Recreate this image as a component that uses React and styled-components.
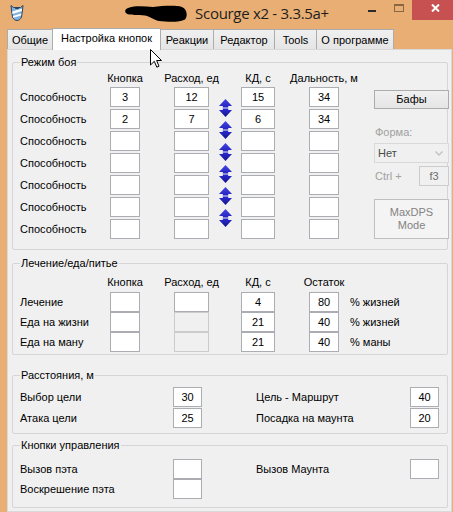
import React from "react";
import styled, { createGlobalStyle } from "styled-components";

const FRAME = "#E8AE73";
const UI_FONT = `"Liberation Sans", Arial, sans-serif`;

const GlobalStyle = createGlobalStyle`
  * { box-sizing: border-box; }
  html, body { margin: 0; padding: 0; }
  body {
    background: ${FRAME};
    font-family: ${UI_FONT};
    font-size: 11px;
    color: #000;
  }
`;

const Window = styled.div`
  position: relative;
  width: 453px;
  height: 512px;
  overflow: hidden;
  background: ${FRAME};
  display: flex;
  flex-direction: column;
`;

/* ---------- title bar ---------- */

const TitleBar = styled.header`
  flex: none;
  height: 28px;
  display: grid;
  grid-template-columns: 1fr auto 1fr;
  align-items: start;
`;

const AppIcon = styled.svg`
  justify-self: start;
  margin: 4px 0 0 10px;
`;

const Caption = styled.div`
  display: flex;
  align-items: center;
  gap: 7px;
  height: 25px;
  font-family: "Open Sans", "Noto Sans", sans-serif;
  font-size: 15px;
  letter-spacing: -0.3px;
  color: #1e1e1e;
  white-space: nowrap;
`;

const Controls = styled.div`
  justify-self: end;
  display: flex;
  margin-right: -6px;
`;

const CtrlButton = styled.div`
  width: ${(p) => p.$w}px;
  height: 20px;
  padding-top: ${(p) => p.$pt}px;
  display: flex;
  justify-content: center;
  align-items: flex-start;
  background: ${(p) => p.$bg || "transparent"};
`;

const MinGlyph = styled.div`
  width: 8px;
  height: 2px;
  background: #2b2b2b;
`;

const MaxGlyph = styled.div`
  width: 10px;
  height: 8px;
  border: 1px solid #8a6644;
  border-top-width: 2px;
`;

/* ---------- tabs ---------- */

const Body = styled.div`
  flex: 1;
  min-height: 0;
  display: flex;
  flex-direction: column;
  padding: 0 1px 0 7px;
`;

const TabStrip = styled.nav`
  flex: none;
  height: 21px;
  display: flex;
  align-items: flex-end;
  position: relative;
  z-index: 1;
`;

const Tab = styled.div`
  width: ${(p) => p.$w}px;
  height: ${(p) => (p.$active ? 22 : 20)}px;
  margin-left: ${(p) => (p.$first ? 0 : -1)}px;
  margin-bottom: ${(p) => (p.$active ? -1 : 0)}px;
  padding-bottom: ${(p) => (p.$active ? 3 : 0)}px;
  border: 1px solid #acacac;
  border-bottom: none;
  background: ${(p) =>
    p.$active ? "#ffffff" : "linear-gradient(#f0f0f0, #e5e5e5)"};
  position: relative;
  z-index: ${(p) => (p.$active ? 2 : 1)};
  display: flex;
  align-items: center;
  justify-content: center;
  white-space: nowrap;
  font-size: 11px;
`;

const TabPage = styled.main`
  flex: 1;
  background: #f0f0f0;
  border: 1px solid #d9d9d9;
  padding: 0 3px 0 4px;
  display: flex;
  flex-direction: column;
`;

/* ---------- group boxes ---------- */

const Group = styled.fieldset`
  margin: ${(p) => p.$mt}px 0 0;
  padding: ${(p) => p.$pt}px 7px ${(p) => p.$pb}px 7px;
  border: 1px solid #d5d5d5;
  border-radius: 2px;
  min-width: 0;
`;

const Legend = styled.legend`
  padding: 0 1px;
  line-height: 14px;
  font-size: 11px;
`;

const GroupBody = styled.div`
  display: flex;
  align-items: flex-start;
`;

const Table = styled.div`
  display: flex;
  flex-direction: column;
`;

const TableRow = styled.div`
  display: grid;
  grid-template-columns: 90px 30px 34px 35px 32px 34px 34px 30px 11px auto;
  height: ${(p) => p.$h}px;
  padding-top: ${(p) => p.$pt || 0}px;
  align-items: start;
`;

const HeadCell = styled.div`
  grid-column: ${(p) => p.$c};
  display: flex;
  justify-content: center;
  white-space: nowrap;
  line-height: 14px;
`;

const RowLabel = styled.span`
  grid-column: ${(p) => p.$c || 1};
  line-height: 20px;
  white-space: nowrap;
`;

const Field = styled.input.attrs({ type: "text", readOnly: true })`
  grid-column: ${(p) => p.$c || "auto"};
  width: ${(p) => (p.$w ? `${p.$w}px` : "100%")};
  height: 20px;
  margin: 0;
  padding: 0;
  border: 1px solid ${(p) => (p.disabled ? "#cccccc" : "#abadb3")};
  background: ${(p) => (p.disabled ? "#f0f0f0" : "#ffffff")};
  color: ${(p) => (p.disabled ? "#6d6d6d" : "#000")};
  -webkit-text-fill-color: ${(p) => (p.disabled ? "#6d6d6d" : "#000")};
  opacity: 1;
  font: 11px ${UI_FONT};
  text-align: center;
  outline: none;
`;

const ArrowCell = styled.div`
  grid-column: 5;
  height: 20px;
  display: flex;
  justify-content: center;
  align-items: flex-start;
`;

const ArrowSvg = styled.svg`
  margin-top: 12px;
  flex: none;
`;

const SidePanel = styled.div`
  width: 76px;
  margin-left: 24px;
  padding-top: 21px;
  display: flex;
  flex-direction: column;
`;

const PushButton = styled.button`
  width: 75px;
  height: ${(p) => p.$h}px;
  margin: ${(p) => p.$mt || 0}px 0 0;
  padding: 0;
  border: 1px solid ${(p) => (p.disabled ? "#bfbfbf" : "#acacac")};
  background: ${(p) =>
    p.disabled ? "#f4f4f4" : "linear-gradient(#f0f0f0, #e5e5e5)"};
  color: ${(p) => (p.disabled ? "#838383" : "#000")};
  font: 11px/13px ${UI_FONT};
`;

const MutedLabel = styled.div`
  margin-top: ${(p) => p.$mt || 0}px;
  line-height: 14px;
  color: #a0a0a0;
  padding-left: 1px;
`;

const ComboBox = styled.div`
  margin-top: 4px;
  height: 20px;
  border: 1px solid #d9d9d9;
  background: #f0f0f0;
  display: flex;
  align-items: center;
  justify-content: space-between;
  padding: 0 5px 0 3px;
  color: #4a4a4a;
`;

const HotkeyRow = styled.div`
  margin-top: 3px;
  display: flex;
  align-items: center;
  justify-content: space-between;
`;

const PairRow = styled.div`
  display: grid;
  grid-template-columns: 153px 29px 54px 154px 29px;
  height: ${(p) => p.$h}px;
  align-items: start;
`;

const Pointer = styled.svg`
  position: absolute;
  left: 150px;
  top: 49px;
  z-index: 10;
`;

/* ---------- drawings ---------- */

const UpDownArrow = () => (
  <ArrowSvg width="13" height="18" viewBox="0 0 13 18">
    <defs>
      <linearGradient id="arrUp" x1="0" y1="0" x2="0" y2="1">
        <stop offset="0" stopColor="#4646e6" />
        <stop offset="1" stopColor="#2323bf" />
      </linearGradient>
      <linearGradient id="arrDown" x1="0" y1="0" x2="0" y2="1">
        <stop offset="0" stopColor="#2a2ad0" />
        <stop offset="1" stopColor="#15158f" />
      </linearGradient>
    </defs>
    <path d="M6.5 0L13 7H9.2V8.5H3.8V7H0Z" fill="url(#arrUp)" />
    <path d="M3.8 9.5H9.2V11H13L6.5 18L0 11H3.8Z" fill="url(#arrDown)" />
  </ArrowSvg>
);

const Chevron = () => (
  <svg width="8" height="5" viewBox="0 0 8 5">
    <path d="M0.5 0.5L4 4L7.5 0.5" fill="none" stroke="#c2c2c2" strokeWidth="1.4" />
  </svg>
);

const Scribble = () => (
  <svg width="64" height="18" viewBox="0 0 64 18">
    <path
      d="M3 4.5C8 1.5 19 2 29 3C39 2 51 1 58 3C63 5 64 12 61 15.5C56 18.5 44 18 35 17C29 16 27 12.5 21 11.5C14 11 6 11.5 2.5 9.5C0.5 8 0.8 5.8 3 4.5Z"
      fill="#000"
    />
  </svg>
);

const Logo = () => (
  <AppIcon width="14" height="17" viewBox="0 0 14 17">
    <path
      d="M1 1.5L3.5 3.5H10.5L13 1.5L12.5 6L11.5 13C10.5 15.5 8.5 16.5 7 16.5C5.5 16.5 3.5 15.5 2.5 13L1.5 6Z"
      fill="#7fb3df"
      stroke="#2d4263"
      strokeWidth="1"
    />
    <path d="M2.2 7.5L11.8 4.8L12 7L2.4 10Z" fill="#ffffff" />
    <path d="M2.8 12L11.4 9.4L11 11.4L3.4 13.8Z" fill="#ffffff" />
    <path d="M4.5 3.5H9.5L8.5 5H5.5Z" fill="#2d4263" />
  </AppIcon>
);

const CloseGlyph = () => (
  <svg width="9" height="8" viewBox="0 0 9 8">
    <path d="M1 0.5L8 7.5M8 0.5L1 7.5" stroke="#fff" strokeWidth="2" />
  </svg>
);

const MouseArrow = () => (
  <Pointer width="12" height="19" viewBox="0 0 12 19">
    <path
      d="M0.5 0.5V16L4.3 12.3L6.8 18.2L9 17.2L6.6 11.5H11.5Z"
      fill="#fff"
      stroke="#000"
      strokeWidth="1"
      strokeLinejoin="miter"
    />
  </Pointer>
);

/* ---------- data ---------- */

const TABS = [
  { label: "Общие", w: 46 },
  { label: "Настройка кнопок", w: 109, active: true },
  { label: "Реакции", w: 54 },
  { label: "Редактор", w: 62 },
  { label: "Tools", w: 43 },
  { label: "О программе", w: 78 },
];

const ABILITIES = [
  { key: "3", cost: "12", cd: "15", range: "34" },
  { key: "2", cost: "7", cd: "6", range: "34" },
  { key: "", cost: "", cd: "", range: "" },
  { key: "", cost: "", cd: "", range: "" },
  { key: "", cost: "", cd: "", range: "" },
  { key: "", cost: "", cd: "", range: "" },
  { key: "", cost: "", cd: "", range: "" },
];

const CONSUMABLES = [
  { label: "Лечение", cd: "4", rest: "80", unit: "% жизней", costOff: false },
  { label: "Еда на жизни", cd: "21", rest: "40", unit: "% жизней", costOff: true },
  { label: "Еда на ману", cd: "21", rest: "40", unit: "% маны", costOff: true },
];

export default function App() {
  return (
    <>
      <GlobalStyle />
      <Window>
        <TitleBar>
          <Logo />
          <Caption>
            <Scribble />
            <span>Scourge x2 - 3.3.5a+</span>
          </Caption>
          <Controls>
            <CtrlButton $w={26} $pt={10}>
              <MinGlyph />
            </CtrlButton>
            <CtrlButton $w={27} $pt={4}>
              <MaxGlyph />
            </CtrlButton>
            <CtrlButton $w={47} $pt={4} $bg="#c75050">
              <CloseGlyph />
            </CtrlButton>
          </Controls>
        </TitleBar>

        <Body>
          <TabStrip>
            {TABS.map((t, i) => (
              <Tab key={t.label} $w={t.w} $active={t.active} $first={i === 0}>
                {t.label}
              </Tab>
            ))}
          </TabStrip>

          <TabPage>
            <Group $mt={5} $pt={0} $pb={8}>
              <Legend>Режим боя</Legend>
              <GroupBody>
                <Table>
                  <TableRow $h={18} $pt={2}>
                    <HeadCell $c={2}>Кнопка</HeadCell>
                    <HeadCell $c={4}>Расход, ед</HeadCell>
                    <HeadCell $c={6}>КД, с</HeadCell>
                    <HeadCell $c={8}>Дальность, м</HeadCell>
                  </TableRow>
                  {ABILITIES.map((a, i) => (
                    <TableRow key={i} $h={22}>
                      <RowLabel>Способность</RowLabel>
                      <Field $c={2} value={a.key} />
                      <Field $c={4} value={a.cost} />
                      <ArrowCell>{i < ABILITIES.length - 1 && <UpDownArrow />}</ArrowCell>
                      <Field $c={6} value={a.cd} />
                      <Field $c={8} value={a.range} />
                    </TableRow>
                  ))}
                </Table>
                <SidePanel>
                  <PushButton $h={19}>Бафы</PushButton>
                  <MutedLabel $mt={16}>Форма:</MutedLabel>
                  <ComboBox>
                    <span>Нет</span>
                    <Chevron />
                  </ComboBox>
                  <HotkeyRow>
                    <MutedLabel>Ctrl +</MutedLabel>
                    <Field $w={30} value="f3" disabled />
                  </HotkeyRow>
                  <PushButton $h={40} $mt={13} disabled>
                    MaxDPS
                    <br />
                    Mode
                  </PushButton>
                </SidePanel>
              </GroupBody>
            </Group>

            <Group $mt={6} $pt={0} $pb={2}>
              <Legend>Лечение/еда/питье</Legend>
              <Table>
                <TableRow $h={22} $pt={5}>
                  <HeadCell $c={2}>Кнопка</HeadCell>
                  <HeadCell $c={4}>Расход, ед</HeadCell>
                  <HeadCell $c={6}>КД, с</HeadCell>
                  <HeadCell $c={8}>Остаток</HeadCell>
                </TableRow>
                {CONSUMABLES.map((c) => (
                  <TableRow key={c.label} $h={20}>
                    <RowLabel>{c.label}</RowLabel>
                    <Field $c={2} value="" />
                    <Field $c={4} value="" disabled={c.costOff} />
                    <Field $c={6} value={c.cd} />
                    <Field $c={8} value={c.rest} />
                    <RowLabel $c={10}>{c.unit}</RowLabel>
                  </TableRow>
                ))}
              </Table>
            </Group>

            <Group $mt={13} $pt={5} $pb={4}>
              <Legend>Расстояния, м</Legend>
              <PairRow $h={21}>
                <RowLabel>Выбор цели</RowLabel>
                <Field $c={2} value="30" />
                <RowLabel $c={4}>Цель - Маршрут</RowLabel>
                <Field $c={5} value="40" />
              </PairRow>
              <PairRow $h={21}>
                <RowLabel>Атака цели</RowLabel>
                <Field $c={2} value="25" />
                <RowLabel $c={4}>Посадка на маунта</RowLabel>
                <Field $c={5} value="20" />
              </PairRow>
            </Group>

            <Group $mt={4} $pt={7} $pb={8}>
              <Legend>Кнопки управления</Legend>
              <PairRow $h={20}>
                <RowLabel>Вызов пэта</RowLabel>
                <Field $c={2} value="" />
                <RowLabel $c={4}>Вызов Маунта</RowLabel>
                <Field $c={5} value="" />
              </PairRow>
              <PairRow $h={20}>
                <RowLabel>Воскрешение пэта</RowLabel>
                <Field $c={2} value="" />
              </PairRow>
            </Group>
          </TabPage>
        </Body>

        <MouseArrow />
      </Window>
    </>
  );
}
